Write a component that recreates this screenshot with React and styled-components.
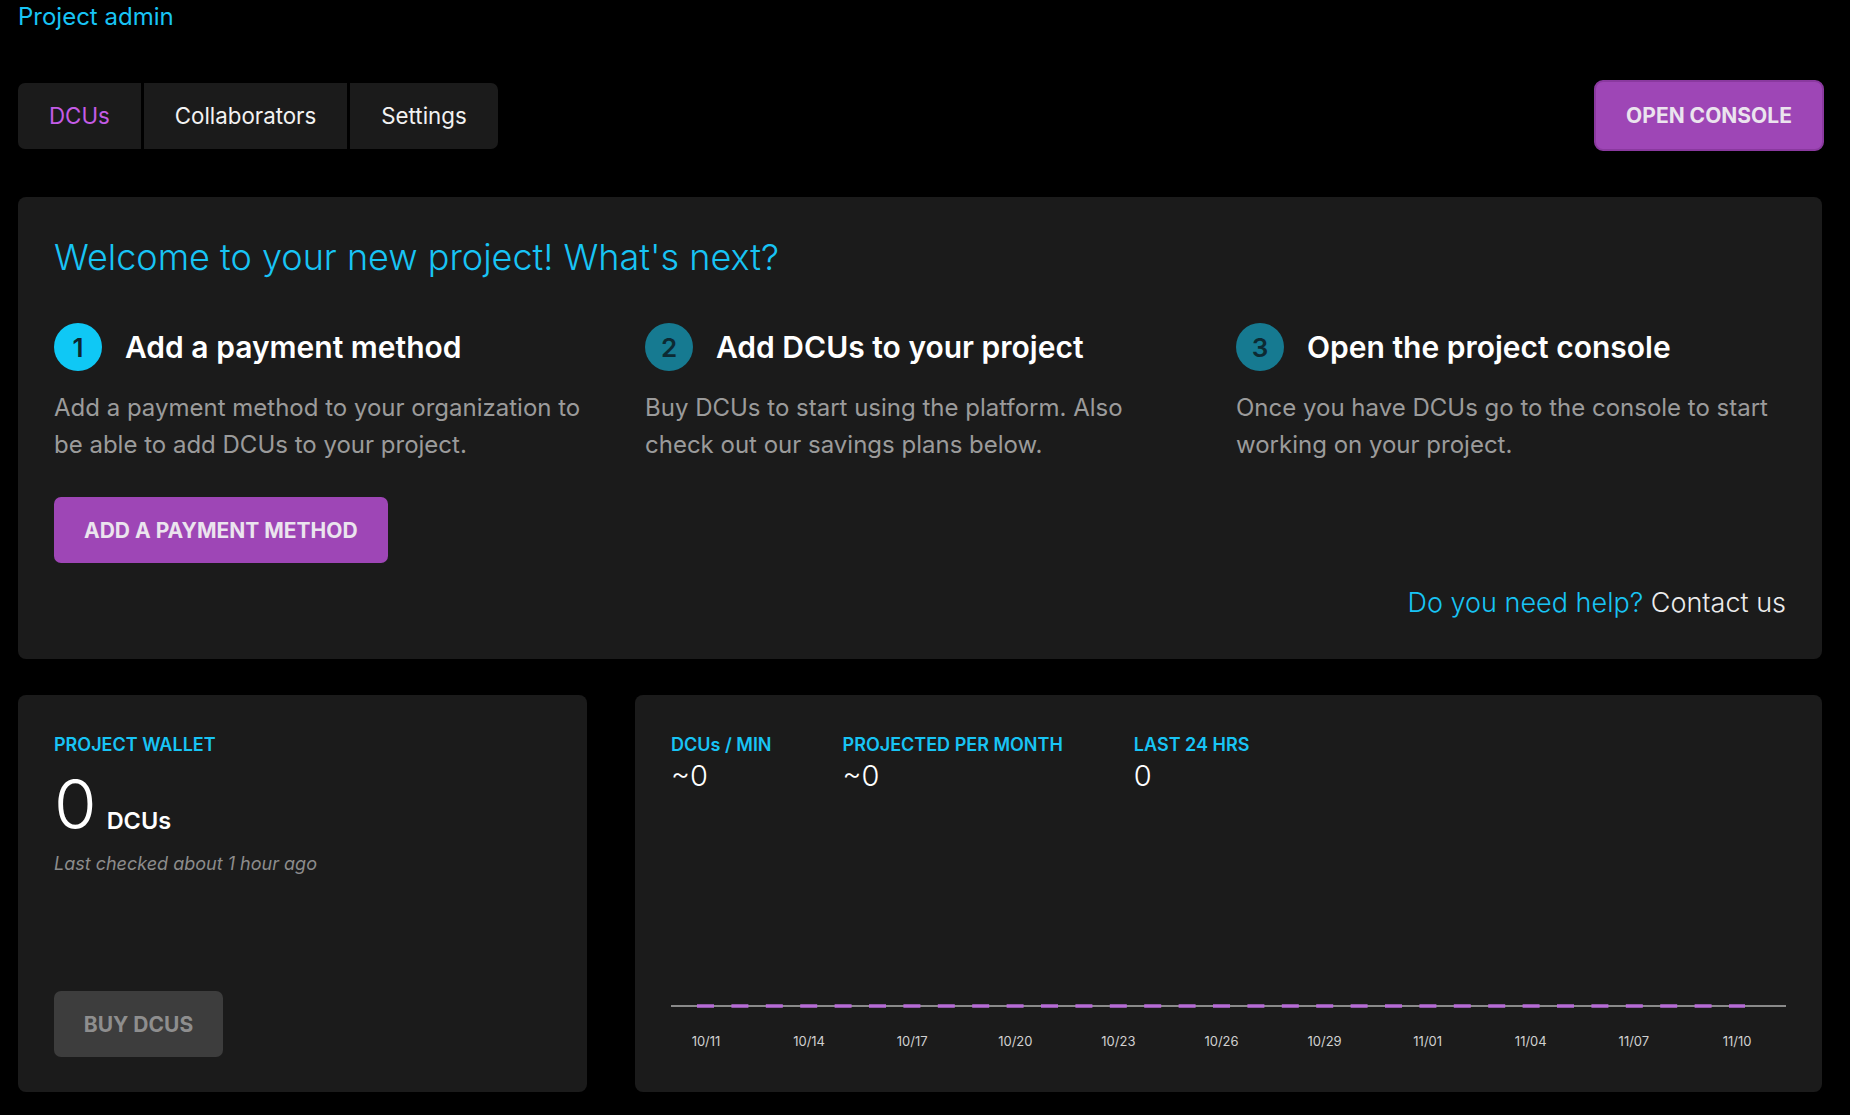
import styled, { createGlobalStyle } from "styled-components";

const GlobalStyle = createGlobalStyle`
  html, body {
    margin: 0;
    padding: 0;
    background: #000;
  }
  body {
    font-family: Inter, "Noto Sans", sans-serif;
    color: #f2f2f2;
  }
  * {
    box-sizing: border-box;
  }
`;

const Page = styled.div`
  padding: 0 28px 0 18px;
`;

const PageTitle = styled.h1`
  margin: 0;
  font-size: 24px;
  line-height: 34px;
  font-weight: 400;
  color: #18c4f5;
`;

const Header = styled.div`
  margin-top: 46px;
  display: flex;
  align-items: center;
  justify-content: space-between;
`;

const Tabs = styled.nav`
  display: flex;
  gap: 3px;
  height: 66px;
`;

const Tab = styled.button`
  border: 0;
  background: #1b1b1b;
  padding: 0 31px;
  font-family: inherit;
  font-size: 22.3px;
  color: ${(p) => (p.$active ? "#c45ce6" : "#f2f2f2")};
  cursor: pointer;
  &:first-child {
    border-radius: 7px 0 0 7px;
  }
  &:last-child {
    border-radius: 0 7px 7px 0;
  }
`;

const Button = styled.button`
  border: 0;
  border-radius: 7px;
  font-family: inherit;
  font-weight: 700;
  text-transform: uppercase;
  background: ${(p) => (p.$muted ? "#3d3d3d" : "#9e46b6")};
  color: ${(p) => (p.$muted ? "#8e8e8e" : "#ebe4ee")};
  cursor: pointer;
`;

const ConsoleButton = styled(Button)`
  width: 230px;
  height: 71px;
  margin-right: -2px;
  font-size: 21px;
  border: 2px solid #8a399f;
  border-radius: 9px;
`;

const Card = styled.section`
  background: #1b1b1b;
  border-radius: 8px;
  padding: 36px;
`;

const WelcomeCard = styled(Card)`
  margin-top: 46px;
  padding: 38px 36px 39px;
`;

const WelcomeTitle = styled.h2`
  margin: 0;
  font-size: 36px;
  line-height: 44px;
  font-weight: 300;
  color: #18c4f5;
`;

const Steps = styled.div`
  margin-top: 44px;
  display: grid;
  grid-template-columns: repeat(3, 1fr);
  column-gap: 41px;
`;

const Step = styled.div`
  display: flex;
  flex-direction: column;
  align-items: flex-start;
`;

const StepHead = styled.div`
  display: flex;
  align-items: center;
  gap: 23px;
`;

const StepNumber = styled.span`
  width: 48px;
  height: 48px;
  border-radius: 50%;
  display: flex;
  align-items: center;
  justify-content: center;
  font-size: 26px;
  font-weight: 600;
  background: ${(p) => (p.$current ? "#0fc8f5" : "#167a91")};
  color: ${(p) => (p.$current ? "#0c2630" : "#0d2a33")};
`;

const StepTitle = styled.h3`
  margin: 0;
  font-size: 30px;
  font-weight: 600;
  color: #fff;
`;

const StepText = styled.p`
  margin: 18px 0 0;
  font-size: 24px;
  line-height: 37px;
  color: #9b9b9b;
`;

const PaymentButton = styled(Button)`
  margin-top: 34px;
  height: 66px;
  padding: 0 30px;
  font-size: 21px;
`;

const Help = styled.p`
  margin: 23px 0 0;
  text-align: right;
  font-size: 27px;
  line-height: 34px;
  font-weight: 300;
  color: #18c4f5;
  span {
    color: #ececec;
  }
`;

const Bottom = styled.div`
  margin-top: 36px;
  display: grid;
  grid-template-columns: 569px 1fr;
  gap: 48px;
  height: 397px;
`;

const Panel = styled(Card)`
  display: flex;
  flex-direction: column;
  align-items: flex-start;
  padding: 39px 36px 35px;
`;

const Label = styled.div`
  font-size: 18px;
  line-height: 22px;
  font-weight: 600;
  color: #18c4f5;
`;

const Balance = styled.div`
  margin-top: 14px;
  display: flex;
  align-items: baseline;
  gap: 10px;
`;

const BigNumber = styled.span`
  font-size: 69px;
  line-height: 68px;
  font-weight: 300;
  color: #fff;
`;

const Unit = styled.span`
  font-size: 23.5px;
  font-weight: 600;
  color: #fff;
`;

const Checked = styled.p`
  margin: 14px 0 0;
  font-size: 18px;
  line-height: 24px;
  font-style: italic;
  color: #8c8c8c;
`;

const BuyButton = styled(Button)`
  margin-top: auto;
  width: 169px;
  height: 66px;
  font-size: 21px;
`;

const Stats = styled.div`
  display: flex;
  gap: 71px;
`;

const Stat = styled.div`
  display: flex;
  flex-direction: column;
`;

const StatValue = styled.span`
  margin-top: 3px;
  font-size: 29px;
  line-height: 34px;
  font-weight: 300;
  color: #fff;
`;

const Chart = styled.svg`
  margin-top: auto;
  display: block;
  width: 100%;
  height: 57px;
  overflow: visible;
`;

const ticks = ["10/11", "10/14", "10/17", "10/20", "10/23", "10/26", "10/29", "11/01", "11/04", "11/07", "11/10"];

function UsageChart() {
  return (
    <Chart>
      <line x1="0" y1="6" x2="100%" y2="6" stroke="#8a8a8a" strokeWidth="2" />
      <line x1="26" y1="6" x2="1074" y2="6" stroke="#b76cd6" strokeWidth="3.5" strokeDasharray="17 17.4" />
      {ticks.map((t, i) => (
        <text
          key={t}
          x={35 + i * 103.1}
          y="46"
          textAnchor="middle"
          fontSize="13"
          fontFamily="Inter, sans-serif"
          fill="#d0d0d0"
        >
          {t}
        </text>
      ))}
    </Chart>
  );
}

const steps = [
  {
    title: "Add a payment method",
    text: "Add a payment method to your organization to be able to add DCUs to your project.",
  },
  {
    title: "Add DCUs to your project",
    text: "Buy DCUs to start using the platform. Also check out our savings plans below.",
  },
  {
    title: "Open the project console",
    text: "Once you have DCUs go to the console to start working on your project.",
  },
];

export default function App() {
  return (
    <Page>
      <GlobalStyle />
      <PageTitle>Project admin</PageTitle>
      <Header>
        <Tabs>
          <Tab $active>DCUs</Tab>
          <Tab>Collaborators</Tab>
          <Tab>Settings</Tab>
        </Tabs>
        <ConsoleButton>Open console</ConsoleButton>
      </Header>

      <WelcomeCard>
        <WelcomeTitle>Welcome to your new project! What's next?</WelcomeTitle>
        <Steps>
          {steps.map((s, i) => (
            <Step key={s.title}>
              <StepHead>
                <StepNumber $current={i === 0}>{i + 1}</StepNumber>
                <StepTitle>{s.title}</StepTitle>
              </StepHead>
              <StepText>{s.text}</StepText>
              {i === 0 && <PaymentButton>Add a payment method</PaymentButton>}
            </Step>
          ))}
        </Steps>
        <Help>
          Do you need help? <span>Contact us</span>
        </Help>
      </WelcomeCard>

      <Bottom>
        <Panel>
          <Label>PROJECT WALLET</Label>
          <Balance>
            <BigNumber>0</BigNumber>
            <Unit>DCUs</Unit>
          </Balance>
          <Checked>Last checked about 1 hour ago</Checked>
          <BuyButton $muted>Buy DCUs</BuyButton>
        </Panel>
        <Panel>
          <Stats>
            <Stat>
              <Label>DCUs / MIN</Label>
              <StatValue>~0</StatValue>
            </Stat>
            <Stat>
              <Label>PROJECTED PER MONTH</Label>
              <StatValue>~0</StatValue>
            </Stat>
            <Stat>
              <Label>LAST 24 HRS</Label>
              <StatValue>0</StatValue>
            </Stat>
          </Stats>
          <UsageChart />
        </Panel>
      </Bottom>
    </Page>
  );
}
